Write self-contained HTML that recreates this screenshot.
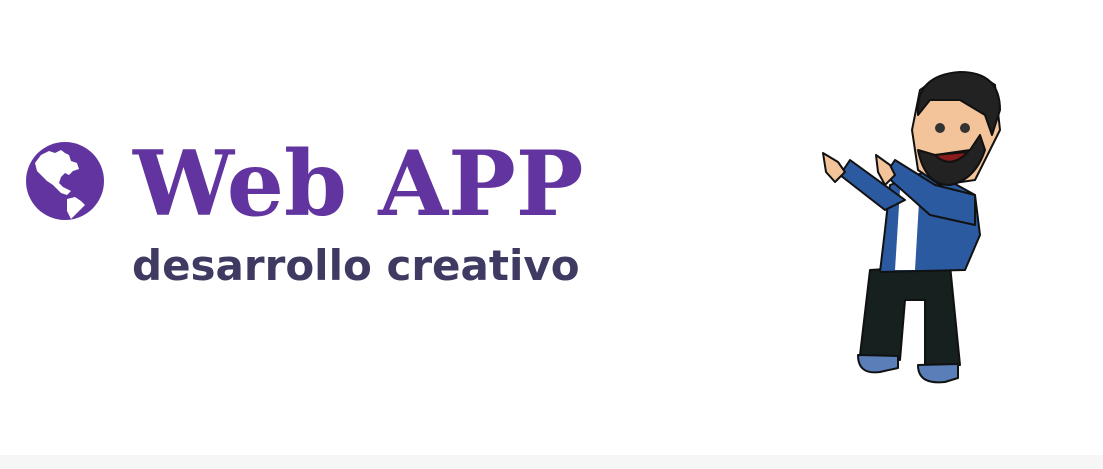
<!DOCTYPE html>
<html><head><meta charset="utf-8"><style>
html,body{margin:0;padding:0;background:#fff;width:1103px;height:469px;overflow:hidden;position:relative}
.t{position:absolute;left:133px;top:131px;font:bold 90px "DejaVu Serif","Liberation Serif",serif;color:#6134a0;white-space:nowrap}
.s{position:absolute;left:132px;top:241px;font:bold 42px "DejaVu Sans","Liberation Sans",sans-serif;color:#3e3a62;white-space:nowrap}
.f{position:absolute;left:0;top:455px;width:1103px;height:14px;background:#f6f6f6}
</style></head><body>
<svg style="position:absolute;left:25px;top:141px" width="80" height="80" viewBox="0 0 80 80">
<circle cx="40" cy="40" r="39" fill="#6134a0"/>
<path d="M10 22 L16 14 L24 10 L30 12 L36 9 L40 12 L44 14 L46 20 L52 22 L54 28 L48 30 L44 34 L40 32 L36 36 L34 42 L38 46 L42 48 L46 50 L42 54 L36 52 L32 48 L28 44 L22 40 L16 34 L12 30 Z" fill="#fff"/>
<path d="M42 58 L50 56 L56 60 L60 64 L54 70 L46 78 L42 70 Z" fill="#fff"/>
</svg>
<div class="t">Web APP</div>
<div class="s">desarrollo creativo</div>
<svg style="position:absolute;left:815px;top:65px" width="200" height="325" viewBox="815 65 200 325">
<g stroke="#111" stroke-width="2" stroke-linejoin="round">
<path d="M870 270 L860 355 L900 360 L905 300 L925 300 L925 365 L960 365 L950 265 Z" fill="#15201f"/>
<path d="M858 355 Q858 375 880 372 L898 368 L898 356 Z" fill="#5a7fb8"/>
<path d="M918 365 Q918 385 945 382 L958 378 L958 364 Z" fill="#5a7fb8"/>
<path d="M890 185 L930 170 L975 195 L980 235 L965 270 L880 272 L885 230 Z" fill="#2b5aa0"/>
<path d="M900 190 L920 185 L915 270 L895 270 Z" fill="#fff" stroke="none"/>
<path d="M840 175 L885 210 L905 200 L850 160 Z" fill="#2b5aa0"/>
<path d="M885 175 L930 215 L975 225 L975 195 L935 185 L895 160 Z" fill="#2b5aa0"/>
<path d="M823 153 L838 162 L845 172 L835 182 L826 172 Z" fill="#f3c39a"/>
<path d="M876 155 L890 165 L895 175 L885 185 L878 172 Z" fill="#f3c39a"/>
<path d="M920 90 Q960 60 995 85 L1000 130 L990 150 L975 180 L940 185 L918 170 L912 130 Z" fill="#f3c39a"/>
<path d="M918 115 Q915 75 960 72 Q1000 72 1000 110 L992 135 L985 115 L960 100 L930 100 Z" fill="#222"/>
<path d="M918 150 Q925 185 950 185 Q975 180 985 150 L980 135 L970 150 L935 155 Z" fill="#222"/>
<path d="M935 155 Q950 170 968 152 Z" fill="#8a1c1c"/>
</g>
<circle cx="940" cy="128" r="5" fill="#333"/><circle cx="965" cy="128" r="5" fill="#333"/>
</svg>
<div class="f"></div>
</body></html>
